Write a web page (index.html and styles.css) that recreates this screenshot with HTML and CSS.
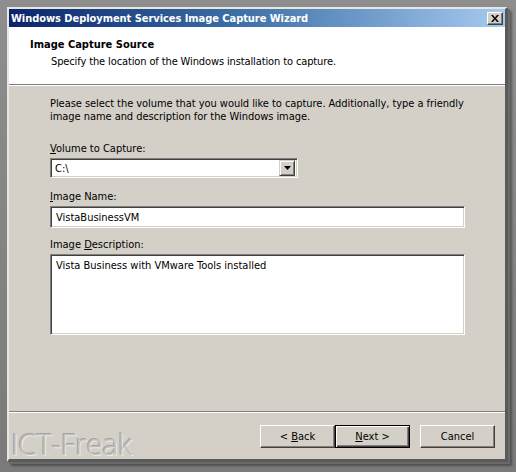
FILE: index.html
```html
<!DOCTYPE html>
<html>
<head>
<meta charset="utf-8">
<link rel="stylesheet" href="styles.css">
</head>
<body>
<div class="window">
  <div class="titlebar">
    <span class="title">Windows Deployment Services Image Capture Wizard</span>
    <span class="close"><svg width="8" height="7" viewBox="0 0 8 7"><path d="M0 0h2l2 2.5L6 0h2L5 3.5 8 7H6L4 4.5 2 7H0l3-3.5z" fill="#000"/></svg></span>
  </div>
  <div class="header">
    <div class="h-title">Image Capture Source</div>
    <div class="h-sub">Specify the location of the Windows installation to capture.</div>
  </div>
  <div class="body">
    <p class="intro">Please select the volume that you would like to capture. Additionally, type a friendly image name and description for the Windows image.</p>
    <div class="label label-vol"><u>V</u>olume to Capture:</div>
    <div class="combo sunken">
      <span class="val">C:\</span>
      <span class="drop"><svg width="7" height="4" viewBox="0 0 7 4"><path d="M0 0h7L3.5 4z" fill="#000"/></svg></span>
    </div>
    <div class="label label-name"><u>I</u>mage Name:</div>
    <div class="textbox sunken">VistaBusinessVM</div>
    <div class="label label-desc">Image <u>D</u>escription:</div>
    <div class="textarea sunken">Vista Business with VMware Tools installed</div>
  </div>
  <div class="footer">
    <div class="buttons">
      <div class="btn"><span>&lt; <u>B</u>ack</span></div>
      <div class="btn default"><span><u>N</u>ext &gt;</span></div>
      <div class="btn cancel"><span>Cancel</span></div>
    </div>
  </div>
</div>
<div class="watermark">ICT-Freak</div>
</body>
</html>
```
FILE: styles.css
```css
html, body {
  margin: 0;
  padding: 0;
}
body {
  width: 516px;
  height: 472px;
  background: linear-gradient(to bottom, #8e8e8e 0, #7a7a7a 100%);
  font-family: "DejaVu Sans", sans-serif;
  font-stretch: condensed;
  font-size: 11px;
  color: #000;
  overflow: hidden;
  position: relative;
}
.window {
  position: absolute;
  left: 7px;
  top: 7px;
  width: 496px;
  height: 450px;
  background: #d4d0c8;
  border-top: 2px solid #e8e6e0;
  border-left: 2px solid #e8e6e0;
  border-right: 3px solid #5a5a5a;
  border-bottom: 3px solid #5a5a5a;
  box-shadow: 2px 2px 0 #6a6a6a, 4px 4px 2px rgba(0,0,0,0.35);
  display: flex;
  flex-direction: column;
}
.titlebar {
  height: 18px;
  background: linear-gradient(to right, #0a246a 0%, #3a6ea5 45%, #a6caf0 100%);
  display: flex;
  align-items: center;
  justify-content: space-between;
  padding: 0 2px 0 2px;
}
.title {
  color: #fff;
  font-weight: bold;
  font-size: 11px;
  letter-spacing: -0.05px;
}
.close {
  width: 14px;
  height: 11px;
  background: #d4d0c8;
  border-top: 1px solid #fff;
  border-left: 1px solid #fff;
  border-right: 1px solid #404040;
  border-bottom: 1px solid #404040;
  box-shadow: inset -1px -1px 0 #808080;
  display: flex;
  align-items: center;
  justify-content: center;
}
.header {
  height: 58px;
  background: #fff;
  border-bottom: 1px solid #808080;
  box-shadow: 0 1px 0 #fff;
  padding: 11px 0 0 21px;
  box-sizing: border-box;
}
.h-title {
  font-weight: bold;
  line-height: 14px;
}
.h-sub {
  padding-left: 21px;
  line-height: 14px;
  margin-top: 3px;
  letter-spacing: -0.12px;
}
.body {
  flex: 1;
  padding: 12px 0 0 41px;
  border-bottom: 1px solid #808080;
  box-shadow: 0 1px 0 #fff;
}
.intro {
  margin: 0;
  line-height: 13px;
  width: 420px;
  letter-spacing: -0.05px;
}
.label {
  line-height: 13px;
}
.label-vol {
  margin-top: 19px;
}
.label-name {
  margin-top: 12px;
}
.label-desc {
  margin-top: 10px;
}
.label + .sunken {
  margin-top: 3px;
}
.sunken {
  box-sizing: border-box;
  background: #fff;
  border-top: 1px solid #808080;
  border-left: 1px solid #808080;
  border-right: 1px solid #fff;
  border-bottom: 1px solid #fff;
  box-shadow: inset 1px 1px 0 #404040, inset -1px -1px 0 #d4d0c8;
}
.combo {
  width: 248px;
  height: 20px;
  display: flex;
  align-items: center;
  justify-content: space-between;
  padding: 2px;
}
.combo .val {
  padding-left: 2px;
}
.drop {
  width: 16px;
  height: 16px;
  box-sizing: border-box;
  background: #d4d0c8;
  border-top: 1px solid #d4d0c8;
  border-left: 1px solid #d4d0c8;
  border-right: 1px solid #404040;
  border-bottom: 1px solid #404040;
  box-shadow: inset 1px 1px 0 #fff, inset -1px -1px 0 #808080;
  display: flex;
  align-items: center;
  justify-content: center;
}
.textbox {
  width: 415px;
  height: 22px;
  padding: 4px 0 0 5px;
  line-height: 13px;
}
.textarea {
  width: 415px;
  height: 81px;
  padding: 4px 0 0 5px;
  line-height: 13px;
}
.footer {
  height: 46px;
  margin-top: 1px;
  padding-top: 12px;
  box-sizing: border-box;
}
.buttons {
  display: flex;
  padding-left: 251px;
}
.btn {
  width: 75px;
  height: 23px;
  box-sizing: border-box;
  background: #d4d0c8;
  border-top: 1px solid #fff;
  border-left: 1px solid #fff;
  border-right: 1px solid #404040;
  border-bottom: 1px solid #404040;
  box-shadow: inset -1px -1px 0 #808080;
  display: flex;
  align-items: center;
  justify-content: center;
  line-height: 13px;
}
.btn.default {
  border: 1px solid #000;
  box-shadow: inset 1px 1px 0 #fff, inset -1px -1px 0 #404040, inset -2px -2px 0 #808080;
}
.btn.cancel {
  margin-left: 10px;
}
.watermark {
  position: absolute;
  left: 11px;
  top: 426px;
  font-family: "Open Sans", sans-serif;
  font-stretch: normal;
  font-weight: 300;
  font-size: 30px;
  letter-spacing: -0.5px;
  color: #c2beb6;
  text-shadow: 1px 1px 0 #ecebe6, -1px -1px 0 #9ea4b0;
  line-height: 36px;
}
```
